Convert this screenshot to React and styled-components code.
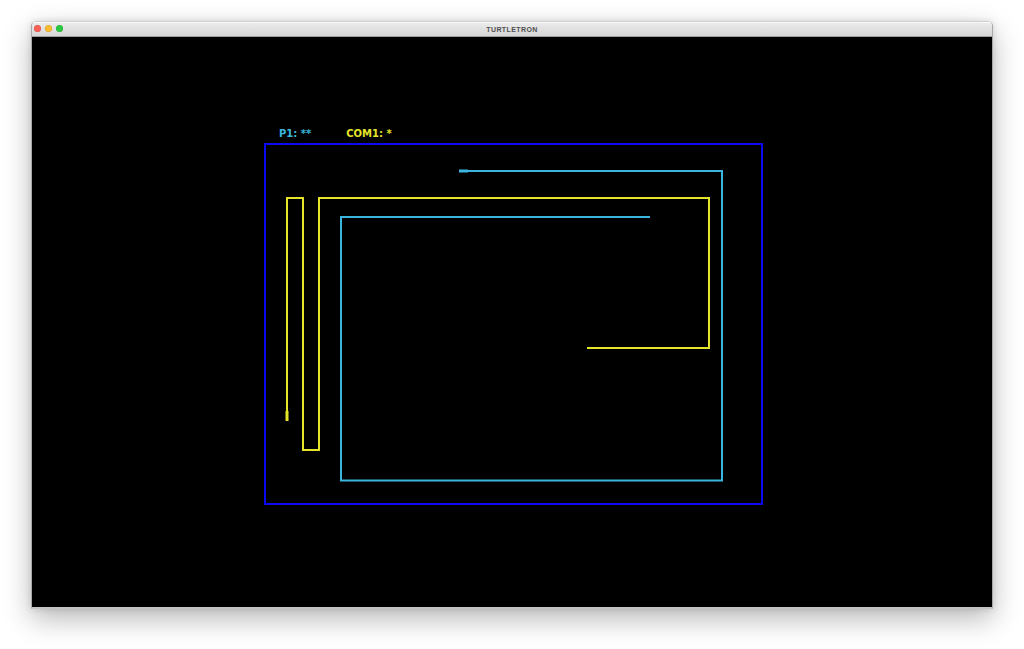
import styled, { createGlobalStyle } from 'styled-components';

const GlobalStyle = createGlobalStyle`
  html, body {
    margin: 0;
    padding: 0;
    background: #ffffff;
  }
  body {
    font-family: "DejaVu Sans", Verdana, sans-serif;
  }
`;

const CYAN = '#3cb5de';
const YELLOW = '#e4e42a';

const Page = styled.div`
  width: 1024px;
  height: 649px;
  padding-top: 21px;
  box-sizing: border-box;
  display: flex;
  justify-content: center;
  overflow: hidden;
`;

const Window = styled.div`
  width: 962px;
  height: 588px;
  display: flex;
  flex-direction: column;
  border-radius: 5px 5px 0 0;
  border: 1px solid #a8a8a8;
  border-top-color: #d0d0d0;
  border-bottom: 2px solid #c4c4c4;
  box-sizing: border-box;
  box-shadow: 0 10px 28px rgba(0, 0, 0, 0.28), 0 0 6px rgba(0, 0, 0, 0.12);
  overflow: hidden;
`;

const TitleBar = styled.div`
  height: 14px;
  flex: none;
  position: relative;
  display: flex;
  align-items: center;
  justify-content: center;
  background: linear-gradient(#ececec, #d6d6d6);
  border-bottom: 1px solid #9e9e9e;
  box-shadow: inset 0 1px 0 #f8f8f8;
`;

const Lights = styled.div`
  position: absolute;
  left: 2px;
  top: 3px;
  display: flex;
  gap: 4px;
`;

const Light = styled.span`
  width: 7px;
  height: 7px;
  border-radius: 50%;
  background: ${p => p.color};
  box-shadow: inset 0 0 0 0.5px rgba(0, 0, 0, 0.15);
`;

const Title = styled.span`
  font-family: "Liberation Sans", Arial, sans-serif;
  font-size: 7px;
  font-weight: bold;
  letter-spacing: 0.4px;
  color: #4f4f4f;
`;

const Screen = styled.div`
  flex: 1;
  background: #000000;
  padding: 90px 0 0 232px;
`;

const Scores = styled.div`
  display: flex;
  gap: 35px;
  padding-left: 15px;
  height: 14px;
  margin-bottom: 2px;
`;

const Score = styled.span`
  font-family: "DejaVu Sans", Verdana, sans-serif;
  font-size: 10px;
  font-weight: bold;
  line-height: 14px;
  color: ${p => p.color};
`;

const Arena = styled.div`
  width: 499px;
  height: 362px;
  border: 2px solid #0a0af2;
  box-sizing: border-box;
`;

const Trails = styled.svg`
  display: block;
  width: 495px;
  height: 358px;
`;

export default function App() {
  return (
    <>
      <GlobalStyle />
      <Page>
        <Window>
          <TitleBar>
            <Lights>
              <Light color="#fc5f57" />
              <Light color="#fdbc2e" />
              <Light color="#28c840" />
            </Lights>
            <Title>TURTLETRON</Title>
          </TitleBar>
          <Screen>
            <Scores>
              <Score color={CYAN}>P1: **</Score>
              <Score color={YELLOW}>COM1: *</Score>
            </Scores>
            <Arena>
              <Trails viewBox="266 146 495 358">
                <polyline
                  points="650,218 341,218 341,481.5 722,481.5 722,172 462,172"
                  fill="none"
                  stroke={CYAN}
                  strokeWidth="2"
                />
                <rect x="459" y="170.5" width="9" height="3" fill={CYAN} />
                <polyline
                  points="287,414 287,199 303,199 303,451 319,451 319,199 709,199 709,349 587,349"
                  fill="none"
                  stroke={YELLOW}
                  strokeWidth="2"
                />
                <rect x="285.5" y="412" width="3" height="10" fill={YELLOW} />
              </Trails>
            </Arena>
          </Screen>
        </Window>
      </Page>
    </>
  );
}
